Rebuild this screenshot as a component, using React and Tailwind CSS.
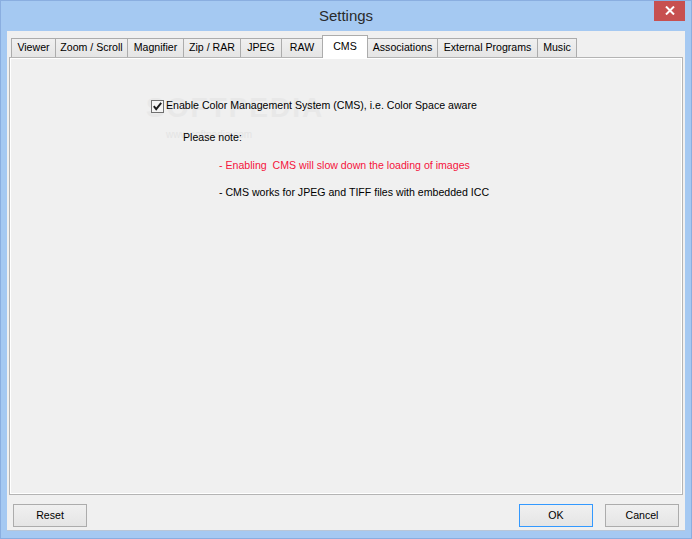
import React from "react";

const tabs = [
  { label: "Viewer", w: "w-[45px]" },
  { label: "Zoom / Scroll", w: "w-[73px]" },
  { label: "Magnifier", w: "w-[57px]" },
  { label: "Zip / RAR", w: "w-[58px]" },
  { label: "JPEG", w: "w-[42px]" },
  { label: "RAW", w: "w-[42px]" },
  { label: "CMS", w: "w-[46px]", active: true },
  { label: "Associations", w: "w-[71px]" },
  { label: "External Programs", w: "w-[101px]" },
  { label: "Music", w: "w-[40px]" },
];

function Tab({ label, w, active, first }) {
  if (active) {
    return (
      <div
        className={`${w} ${first ? "" : "-ml-px"} relative z-10 h-[23px] -mb-px flex items-start justify-center pt-[3px] border border-b-0 border-[#acacac] bg-white text-black`}
      >
        {label}
      </div>
    );
  }
  return (
    <div
      className={`${w} ${first ? "" : "-ml-px"} h-[19px] flex items-center justify-center border border-b-0 border-[#acacac] bg-gradient-to-b from-[#f0f0f0] to-[#e5e5e5] text-black`}
    >
      {label}
    </div>
  );
}

function Button({ children, focused }) {
  return (
    <div
      className={`w-[74px] h-[23px] flex items-center justify-center border ${
        focused ? "border-[#3399ff]" : "border-[#acacac]"
      } bg-gradient-to-b from-[#f0f0f0] to-[#e5e5e5] text-black`}
    >
      {children}
    </div>
  );
}

export default function App() {
  return (
    <div
      className="w-[692px] h-[539px] bg-[#a5c9f2] border border-[#8aaee0] flex flex-col text-[10.6px] overflow-hidden"
      style={{ fontFamily: '"Liberation Sans", Arial, sans-serif' }}
    >
      {/* Title bar */}
      <div className="relative h-[30px] flex items-center justify-center">
        <span className="text-[15px] text-[#2b2b2b] leading-none -mt-[2px]">Settings</span>
        <div className="absolute right-[6px] top-[-1px] w-[31px] h-[21px] bg-[#c75050] flex items-center justify-center">
          <svg width="10" height="9" viewBox="0 0 10 9">
            <path d="M1 0.5 L9 8.5 M9 0.5 L1 8.5" stroke="white" strokeWidth="2" />
          </svg>
        </div>
      </div>

      {/* Client area */}
      <div className="flex-1 mx-[6px] mb-[7px] bg-[#f0f0f0] flex flex-col border-b border-[#b8c6d8]">
        {/* Tabs */}
        <div className="mt-[4px] ml-[4px] flex items-end relative z-10">
          {tabs.map((t, i) => (
            <Tab key={t.label} {...t} first={i === 0} />
          ))}
        </div>

        {/* Panel */}
        <div className="relative mx-[2px] h-[438px] border border-[#b4b4b4] bg-[#f0f0f0] shadow-[inset_1px_1px_0_#ffffff,inset_-1px_-1px_0_#ffffff]">
          {/* watermark */}
          <div className="absolute left-[136px] top-[36px] text-[28px] font-bold tracking-[2px] text-[#e8e8e8] leading-none select-none">
            SOFTPEDIA
          </div>
          <div className="absolute left-[156px] top-[72px] text-[10px] text-[#e4e4e4] leading-none select-none">
            www.softpedia.com
          </div>

          <div className="relative flex flex-col pt-[41px]">
            <div className="flex items-center ml-[141px] h-[14px]">
              <svg width="13" height="13" viewBox="0 0 13 13" className="shrink-0">
                <rect x="0.5" y="0.5" width="12" height="12" fill="#f4f4f4" stroke="#707070" />
                <path d="M2.8 6.2 L5.2 9.2 L10.2 2.8" stroke="#1a1a1a" strokeWidth="1.9" fill="none" />
              </svg>
              <span className="ml-[2px] text-black">
                Enable Color Management System (CMS), i.e. Color Space aware
              </span>
            </div>
            <div className="ml-[173px] mt-[18px] h-[14px] flex items-center text-black">
              Please note:
            </div>
            <div className="ml-[209px] mt-[14px] h-[14px] flex items-center text-[#f5143c]">
              - Enabling&nbsp; CMS will slow down the loading of images
            </div>
            <div className="ml-[209px] mt-[13px] h-[14px] flex items-center text-black">
              - CMS works for JPEG and TIFF files with embedded ICC
            </div>
          </div>
        </div>

        {/* Buttons */}
        <div className="flex items-center mt-[9px] ml-[6px] mr-[6px]">
          <Button>Reset</Button>
          <div className="flex-1" />
          <Button focused>OK</Button>
          <div className="w-[12px]" />
          <Button>Cancel</Button>
        </div>
      </div>
    </div>
  );
}
